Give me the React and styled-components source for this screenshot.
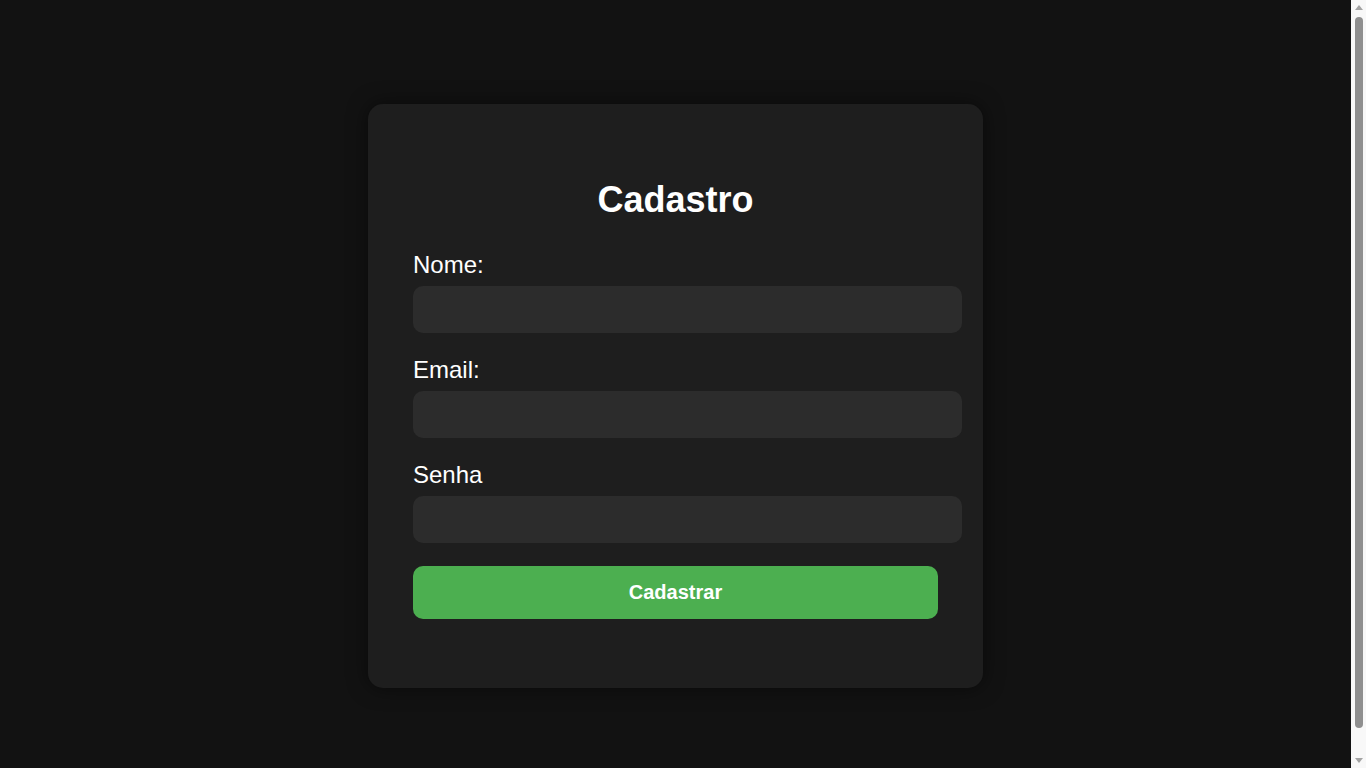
import React from 'react';
import styled, { createGlobalStyle } from 'styled-components';

const GlobalStyle = createGlobalStyle`
  html, body {
    margin: 0;
    padding: 0;
    background: #121212;
  }
  body {
    font-family: "Liberation Sans", Arial, sans-serif;
    color: #fff;
  }
`;

const Page = styled.div`
  min-height: 100vh;
  padding: 12px 0;
  margin-right: 15px;
  display: flex;
  align-items: center;
  justify-content: center;
`;

// stand-in for the browser's classic scrollbar seen in the reference
const ScrollTrack = styled.div`
  position: fixed;
  top: 0;
  right: 0;
  width: 15px;
  height: 100vh;
  background: #f8f8f8;
  display: flex;
  flex-direction: column;
  align-items: center;
  padding: 5px 0;
  box-sizing: border-box;
`;

const Arrow = styled.div`
  width: 0;
  height: 0;
  border-left: 4px solid transparent;
  border-right: 4px solid transparent;
  ${p => (p.$down ? 'border-top: 5px solid #a3a3a3; margin-top: auto;' : 'border-bottom: 5px solid #a3a3a3;')}
`;

const Thumb = styled.div`
  height: 711px;
  width: 8px;
  margin-top: 7px;
  border-radius: 4px;
  background: #8f8f8f;
`;

const Card = styled.form`
  width: 525px;
  padding: 45px;
  background: #1e1e1e;
  border-radius: 15px;
  box-shadow: 0 0 20px rgba(0, 0, 0, 0.5);
`;

const Title = styled.h1`
  margin: 30px 0 31px;
  font-size: 36px;
  line-height: 41px;
  font-weight: bold;
  text-align: center;
`;

const Label = styled.label`
  display: block;
  font-size: 24px;
  line-height: 28px;
  margin-bottom: 7px;
`;

const Input = styled.input`
  display: block;
  box-sizing: content-box;
  width: 100%;
  padding: 12px;
  margin: 0 0 23px;
  border: none;
  border-radius: 10px;
  background: #2c2c2c;
  color: #fff;
  font-family: inherit;
  font-size: 20px;
  line-height: 23px;
  height: 23px;
  outline: none;
`;

const Button = styled.button`
  display: block;
  width: 100%;
  margin: 0 0 24px;
  padding: 15px;
  border: none;
  border-radius: 10px;
  background: #4caf50;
  color: #fff;
  font-family: inherit;
  font-size: 20px;
  line-height: 23px;
  font-weight: bold;
  cursor: pointer;
`;

const fields = [
  { id: 'nome', label: 'Nome:', type: 'text' },
  { id: 'email', label: 'Email:', type: 'email' },
  { id: 'senha', label: 'Senha', type: 'password' },
];

export default function App() {
  return (
    <>
      <GlobalStyle />
      <Page>
        <Card onSubmit={e => e.preventDefault()}>
          <Title>Cadastro</Title>
          {fields.map(f => (
            <div key={f.id}>
              <Label htmlFor={f.id}>{f.label}</Label>
              <Input id={f.id} type={f.type} />
            </div>
          ))}
          <Button type="submit">Cadastrar</Button>
        </Card>
      </Page>
      <ScrollTrack>
        <Arrow />
        <Thumb />
        <Arrow $down />
      </ScrollTrack>
    </>
  );
}
